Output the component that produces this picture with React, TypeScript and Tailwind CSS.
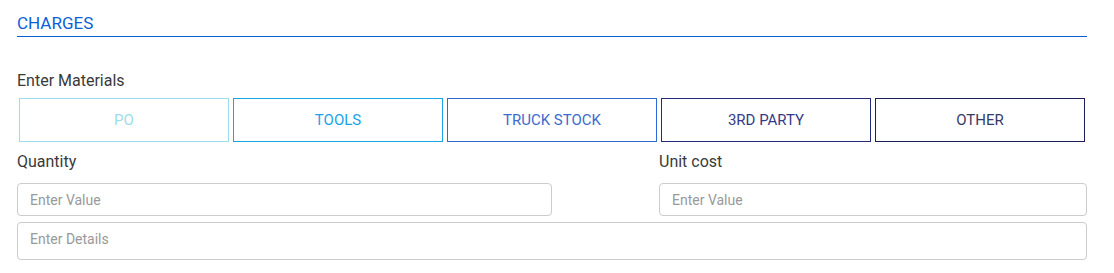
const materials = [
  { label: "PO", cls: "border-[#9ddcea] text-[#9ddcea]" },
  { label: "TOOLS", cls: "border-[#1aa3e8] text-[#1aa3e8]" },
  { label: "TRUCK STOCK", cls: "border-[#2f6bd4] text-[#3d6bd0]" },
  { label: "3RD PARTY", cls: "border-[#262c7a] text-[#353b86]" },
  { label: "OTHER", cls: "border-[#1c1f5c] text-[#363a66]" },
]

export default function App() {
  return (
    <div className="w-[1114px] h-[273px] bg-white font-['Roboto',sans-serif] pl-[17px] pr-[27px] pt-[13px]">
      {/* Section header */}
      <div className="border-b border-[#0a5fd6] pb-[3px]">
        <h2 className="text-[17px] leading-[20px] text-[#0a5fd6]">CHARGES</h2>
      </div>

      <div className="mt-[34px] text-[16px] leading-[20px] text-[#3a3a3a]">Enter Materials</div>

      <div className="mt-[7px] px-[2px] grid grid-cols-5 gap-[4px]">
        {materials.map((m) => (
          <button
            key={m.label}
            className={`h-[44px] border bg-white text-[15px] ${m.cls}`}
          >
            {m.label}
          </button>
        ))}
      </div>

      <div className="mt-[10px] flex gap-[107px]">
        <div className="w-[535px] flex flex-col">
          <label className="text-[16px] leading-[20px] text-[#3a3a3a]">Quantity</label>
          <input
            placeholder="Enter Value"
            className="mt-[11px] h-[33px] rounded-[4px] border border-[#ccc] px-[12px] text-[14px] placeholder:text-[#999] outline-none"
          />
        </div>
        <div className="flex-1 flex flex-col">
          <label className="text-[16px] leading-[20px] text-[#3a3a3a]">Unit cost</label>
          <input
            placeholder="Enter Value"
            className="mt-[11px] h-[33px] rounded-[4px] border border-[#ccc] px-[12px] text-[14px] placeholder:text-[#999] outline-none"
          />
        </div>
      </div>

      <textarea
        placeholder="Enter Details"
        className="mt-[6px] block w-full h-[38px] resize-none rounded-[4px] border border-[#ccc] px-[12px] pt-[8px] text-[14px] leading-[16px] placeholder:text-[#999] outline-none"
      />
    </div>
  )
}
